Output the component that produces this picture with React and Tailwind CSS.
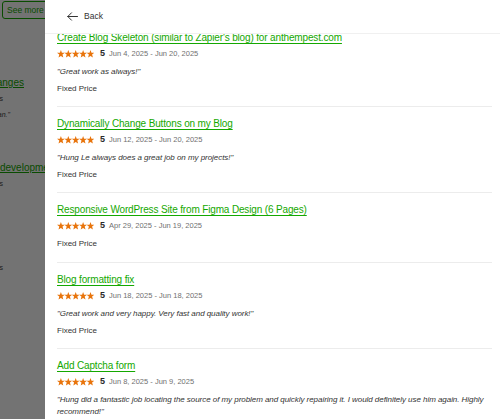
import React from "react";

const reviews = [
  {
    title: "Create Blog Skeleton (similar to Zapier's blog) for anthempest.com",
    rating: 5,
    dates: "Jun 4, 2025 - Jun 20, 2025",
    quote: "\"Great work as always!\"",
  },
  {
    title: "Dynamically Change Buttons on my Blog",
    rating: 5,
    dates: "Jun 12, 2025 - Jun 20, 2025",
    quote: "\"Hung Le always does a great job on my projects!\"",
  },
  {
    title: "Responsive WordPress Site from Figma Design (6 Pages)",
    rating: 5,
    dates: "Apr 29, 2025 - Jun 19, 2025",
    quote: null,
  },
  {
    title: "Blog formatting fix",
    rating: 5,
    dates: "Jun 18, 2025 - Jun 18, 2025",
    quote: "\"Great work and very happy. Very fast and quality work!\"",
  },
  {
    title: "Add Captcha form",
    rating: 5,
    dates: "Jun 8, 2025 - Jun 9, 2025",
    quote:
      "\"Hung did a fantastic job locating the source of my problem and quickly repairing it. I would definitely use him again. Highly recommend!\"",
  },
];

function Stars() {
  return (
    <svg width="37" height="8" viewBox="0 0 37 8" className="block">
      {[0, 1, 2, 3, 4].map((i) => (
        <polygon
          key={i}
          transform={`translate(${i * 7.4} 0)`}
          points="3.9,0 4.9,2.7 7.8,2.8 5.5,4.6 6.3,7.6 3.9,5.9 1.5,7.6 2.3,4.6 0,2.8 2.9,2.7"
          fill="#e8740c"
        />
      ))}
    </svg>
  );
}

function ReviewItem({ item, first }) {
  const pad = first ? "-mt-[3px]" : "pt-[10px]";
  const bottom = item.quote ? "pb-[11px]" : "pb-[12px]";
  return (
    <div className={`${pad} ${bottom} border-b border-[#ececec]`}>
      <div className="text-[10px] leading-[14px] tracking-[-0.15px] text-[#14a800] underline underline-offset-[1.5px]">
        {item.title}
      </div>
      <div className="mt-[3px] flex items-center h-[12px]">
        <Stars />
        <span className="ml-[6px] text-[9px] font-bold text-[#2a2a2a]">{item.rating}</span>
        <span className="ml-[4px] text-[7.5px] text-[#707070]">{item.dates}</span>
      </div>
      {item.quote && (
        <div className="mt-[6px] text-[8px] leading-[12px] tracking-[-0.05px] italic text-[#333]">{item.quote}</div>
      )}
      <div className={item.quote ? "mt-[5px] text-[8px] leading-[12px] text-[#333]" : "mt-[6px] text-[8px] leading-[12px] text-[#333]"}>
        Fixed Price
      </div>
    </div>
  );
}

function BackLine({ children, className }) {
  return (
    <div className={`flex justify-end whitespace-nowrap ${className}`}>{children}</div>
  );
}

export default function App() {
  return (
    <div
      className="relative w-[500px] h-[419px] overflow-hidden bg-white"
      style={{ fontFamily: '"Liberation Sans", Arial, sans-serif' }}
    >
      {/* page behind the drawer */}
      <div className="h-full overflow-hidden">
        <div className="flex">
          <div className="ml-[2px] mt-[1px] h-[18px] pl-[4px] pr-3 flex items-center border border-[#14a800] rounded-[3px] text-[8.5px] whitespace-nowrap text-[#14a800]">
            See more projects
          </div>
        </div>
        <BackLine className="w-[24px] mt-[57px] text-[10px] leading-[14px] text-[#14a800] underline">
          Header Changes
        </BackLine>
        <BackLine className="w-[3px] mt-[3px] text-[7px] leading-[12px] text-[#444]">
          Jun 12, 2025 - Jun 20, 2025s
        </BackLine>
        <BackLine className="w-[10px] mt-[4px] text-[7px] leading-[12px] italic text-[#444]">
          "Great work on this design plan."
        </BackLine>
        <div className="mt-[40px] text-[10px] leading-[14px] whitespace-nowrap text-[#14a800] underline">
          development
        </div>
        <BackLine className="w-[3px] mt-[3px] text-[7px] leading-[12px] text-[#444]">
          Hourlys
        </BackLine>
        <BackLine className="w-[3px] mt-[72px] text-[7px] leading-[12px] text-[#444]">
          Hourlys
        </BackLine>
      </div>

      {/* dim overlay */}
      <div className="absolute inset-0 bg-black/55" />

      {/* drawer */}
      <div className="absolute top-0 right-0 h-full w-[455px] bg-white flex flex-col">
        <div className="h-[34px] shrink-0 flex items-center pl-[22px] border-b border-[#f0f0f0] relative z-10 bg-white">
          <svg width="11" height="9" viewBox="0 0 11 9" fill="none" stroke="#333" strokeWidth="1" strokeLinecap="round" strokeLinejoin="round">
            <path d="M10.5 4.5H0.8M4.5 0.8L0.8 4.5L4.5 8.2" />
          </svg>
          <span className="ml-[6px] text-[8.5px] text-[#333]">Back</span>
        </div>
        <div className="flex-1 overflow-hidden pl-[12px] pr-[8px]">
          {reviews.map((r, i) => (
            <ReviewItem key={i} item={r} first={i === 0} />
          ))}
        </div>
      </div>
    </div>
  );
}
